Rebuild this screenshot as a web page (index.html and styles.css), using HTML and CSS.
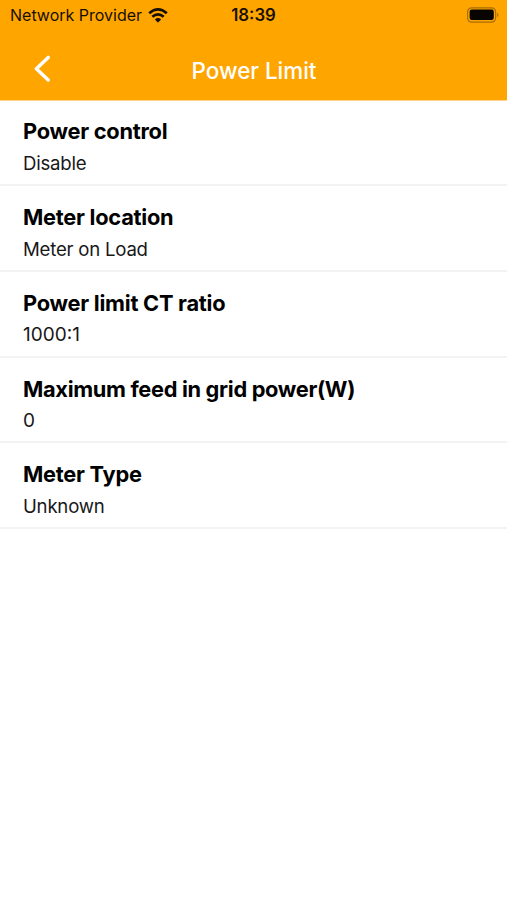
FILE: index.html
```html
<!DOCTYPE html>
<html lang="en">
<head>
<meta charset="utf-8">
<title>Power Limit</title>
<link rel="stylesheet" href="styles.css">
</head>
<body>
<header class="top">
  <div class="status">
    <div class="carrier"><span class="provider">Network Provider</span>
      <svg class="wifi" width="20" height="15" viewBox="0 0 20 15" fill="none" stroke="#171000" stroke-width="2.7"><path d="M1.2 5.3Q10-2.4 18.8 5.3"/><path d="M4.3 8.8Q10 4 15.7 8.8"/><path d="M6.9 11.4Q10 8.6 13.1 11.4L10.7 14.1Q10 14.8 9.3 14.1Z" fill="#171000" stroke="none"/></svg>
    </div>
    <span class="clock">18:39</span>
    <svg class="battery" width="33" height="17" viewBox="0 0 33 17"><rect x="1.6" y=".8" width="28" height="14.4" rx="4.2" fill="none" stroke="#a86d04" stroke-width="1.2"/><rect x="3.6" y="2.5" width="24.2" height="10.4" rx="2.2" fill="#080500"/><path d="M31.3 5.6Q33.4 7.9 31.3 10.2Z" fill="#8b5c08"/></svg>
  </div>
  <nav class="nav">
    <svg class="back" width="18" height="28" viewBox="0 0 18 28" fill="none" stroke="#fff" stroke-width="3.4" stroke-linecap="round" stroke-linejoin="round"><path d="M15.2 2.4 3.4 13.7 15.2 25"/></svg>
    <h1 class="title">Power Limit</h1>
  </nav>
</header>
<main class="list">
  <section class="row"><h2 class="label">Power control</h2><p class="value">Disable</p></section>
  <section class="row"><h2 class="label">Meter location</h2><p class="value">Meter on Load</p></section>
  <section class="row"><h2 class="label">Power limit CT ratio</h2><p class="value numeric">1000:1</p></section>
  <section class="row"><h2 class="label long">Maximum feed in grid power(W)</h2><p class="value numeric">0</p></section>
  <section class="row"><h2 class="label">Meter Type</h2><p class="value">Unknown</p></section>
</main>
</body>
</html>
```
FILE: styles.css
```css
* { box-sizing: border-box; }
body { margin: 0; background: #fff; color: #000; font-family: Inter, sans-serif; }
.top { height: 100px; background: #ffa500; }
.status { height: 30px; padding: 0 8px 0 10px; display: grid; grid-template-columns: 1fr auto 1fr; align-items: center; color: #171000; }
.carrier { display: flex; align-items: center; gap: 6px; }
.provider { font-size: 16px; white-space: nowrap; }
.clock { margin-right: 2px; font-size: 16.8px; font-weight: 600; }
.battery { justify-self: end; }
.nav { height: 70px; padding: 8px 33px 0; display: grid; grid-template-columns: 18px 1fr 18px; align-items: center; }
.title { margin: 4px 0 0 1px; color: #fff; font-size: 22.4px; line-height: 28px; font-weight: 500; text-align: center; }
.list { border-top: 1px solid #ffd388; }
.row { height: 85.75px; padding: 16px 23px 0; border-bottom: 2px solid #f3f3f3; }
.row:first-child { height: 85px; }
.row + .row { padding-top: 17px; }
.label { margin: 0; font-size: 21.8px; line-height: 28px; font-weight: 650; letter-spacing: -.25px; white-space: nowrap; }
.label.long { letter-spacing: -.32px; }
.value { margin: 5px 0 0; color: #181818; font-size: 18.6px; line-height: 26px; letter-spacing: -.22px; }
.value.numeric { font-size: 19px; letter-spacing: 0; }
```
